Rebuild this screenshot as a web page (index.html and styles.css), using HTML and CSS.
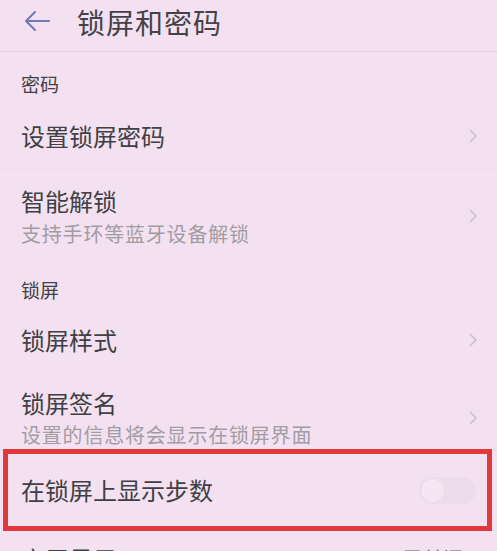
FILE: index.html
```html
<!DOCTYPE html>
<html lang="zh-CN">
<head>
<meta charset="utf-8">
<link rel="stylesheet" href="styles.css">
</head>
<body>
<div class="screen">
  <header class="topbar">
    <svg class="back" width="26" height="22" viewBox="0 0 26 22">
      <path d="M11 2 L2 11 L11 20 M2 11 H25" fill="none" stroke="#7379b4" stroke-width="2" stroke-linecap="round" stroke-linejoin="round"/>
    </svg>
    <h1 class="title">锁屏和密码</h1>
  </header>

  <div class="sec sec-pwd">密码</div>

  <div class="row row-1">
    <div class="texts"><div class="main">设置锁屏密码</div></div>
    <svg class="chev" width="10" height="16" viewBox="0 0 10 16"><path d="M2 2 L8 8 L2 14" fill="none" stroke="#cbbfcb" stroke-width="1.6"/></svg>
  </div>

  <div class="row row-2">
    <div class="texts"><div class="main">智能解锁</div><div class="sub">支持手环等蓝牙设备解锁</div></div>
    <svg class="chev" width="10" height="16" viewBox="0 0 10 16"><path d="M2 2 L8 8 L2 14" fill="none" stroke="#cbbfcb" stroke-width="1.6"/></svg>
  </div>

  <div class="sec sec-lock">锁屏</div>

  <div class="row row-3">
    <div class="texts"><div class="main">锁屏样式</div></div>
    <svg class="chev" width="10" height="16" viewBox="0 0 10 16"><path d="M2 2 L8 8 L2 14" fill="none" stroke="#cbbfcb" stroke-width="1.6"/></svg>
  </div>

  <div class="row row-4">
    <div class="texts"><div class="main">锁屏签名</div><div class="sub">设置的信息将会显示在锁屏界面</div></div>
    <svg class="chev" width="10" height="16" viewBox="0 0 10 16"><path d="M2 2 L8 8 L2 14" fill="none" stroke="#cbbfcb" stroke-width="1.6"/></svg>
  </div>

  <div class="highlight">
    <div class="main">在锁屏上显示步数</div>
    <div class="toggle"><span class="knob"></span></div>
  </div>

  <div class="row row-5">
    <div class="main">亮屏显示</div>
    <div class="value">已关闭</div>
  </div>
</div>
</body>
</html>
```

FILE: styles.css
```css
html, body {
  margin: 0;
  padding: 0;
  background: #f3e1f1;
}
body {
  width: 497px;
  height: 551px;
  overflow: hidden;
  font-family: "Noto Sans CJK SC", "Noto Sans", sans-serif;
  color: #424146;
}
.screen {
  width: 497px;
  height: 551px;
  overflow: hidden;
  background: #f3e1f1;
}
.topbar {
  height: 51px;
  border-bottom: 1px solid #e2cde0;
  display: flex;
  align-items: flex-start;
  padding-left: 24px;
}
.back {
  margin-top: 10px;
}
.title {
  margin: 0 0 0 27px;
  font-size: 28px;
  font-weight: 400;
  line-height: 44px;
  color: #434247;
  letter-spacing: 1px;
}
.sec {
  font-size: 19px;
  line-height: 28px;
  padding-left: 21px;
  color: #424146;
}
.sec-pwd { padding-top: 18px; }
.sec-lock { padding-top: 29px; }
.row {
  display: flex;
  align-items: center;
  justify-content: space-between;
  padding-left: 21px;
  padding-right: 19px;
}
.main {
  font-size: 24px;
  line-height: 32px;
  color: #403f44;
}
.sub {
  font-size: 20px;
  line-height: 26px;
  color: #a29ca3;
  margin-top: 4px;
  letter-spacing: 0.8px;
}
.row-1 { padding-top: 22px; padding-bottom: 16px; border-bottom: 1px solid #efdcec; }
.row-2 { padding-top: 16px; }
.row-3 { padding-top: 20px; }
.row-4 { padding-top: 31px; }
.row-4 .sub { margin-top: 3px; }
.highlight {
  margin: 1px 5px 0 3px;
  border: 5px solid #e1383c;
  height: 72px;
  display: flex;
  align-items: center;
  justify-content: space-between;
  padding: 0 11px 0 13px;
}
.toggle {
  width: 57px;
  height: 27px;
  border-radius: 14px;
  background: #ecdcec;
  display: flex;
  align-items: center;
  padding-left: 2px;
  box-sizing: border-box;
}
.knob {
  width: 23px;
  height: 23px;
  border-radius: 50%;
  background: #f4e6f3;
  box-shadow: 0 0 1px #e0cfe0;
}
.row-5 { padding-top: 12px; padding-right: 34px; }
.value {
  font-size: 20px;
  line-height: 32px;
  color: #6f6a70;
}
```
